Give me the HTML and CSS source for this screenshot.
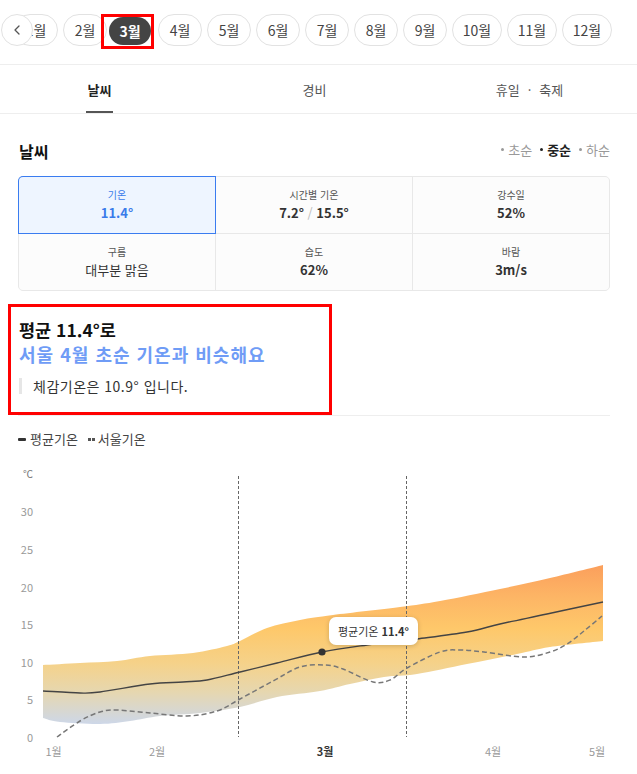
FILE: index.html
```html
<!DOCTYPE html>
<html lang="ko">
<head>
<meta charset="utf-8">
<title>날씨</title>
<link rel="stylesheet" href="styles.css">
</head>
<body>
<div class="months">
  <button class="prev" aria-label="이전"><svg width="30" height="30" viewBox="0 0 30 30"><polyline points="17,11 13,15 17,19" fill="none" stroke="#555" stroke-width="1.3" stroke-linecap="round" stroke-linejoin="round"/></svg></button>
  <span class="pill">1월</span>
  <span class="pill">2월</span>
  <span class="mark"><span class="pill on">3월</span></span>
  <span class="pill">4월</span>
  <span class="pill">5월</span>
  <span class="pill">6월</span>
  <span class="pill">7월</span>
  <span class="pill">8월</span>
  <span class="pill">9월</span>
  <span class="pill wide">10월</span>
  <span class="pill wide">11월</span>
  <span class="pill wide">12월</span>
</div>

<nav class="tabs">
  <div class="tab active"><span>날씨</span></div>
  <div class="tab"><span>경비</span></div>
  <div class="tab"><span>휴일<i class="dot">·</i>축제</span></div>
</nav>

<section class="section">
  <div class="head">
    <h2>날씨</h2>
    <ul class="period">
      <li>초순</li>
      <li class="on">중순</li>
      <li>하순</li>
    </ul>
  </div>

  <div class="stats">
    <div class="cell on"><div class="lbl">기온</div><div class="val">11.4°</div></div>
    <div class="cell"><div class="lbl">시간별 기온</div><div class="val">7.2° <span class="slash">/</span> 15.5°</div></div>
    <div class="cell"><div class="lbl">강수일</div><div class="val">52%</div></div>
    <div class="cell"><div class="lbl">구름</div><div class="val plain">대부분 맑음</div></div>
    <div class="cell"><div class="lbl">습도</div><div class="val">62%</div></div>
    <div class="cell"><div class="lbl">바람</div><div class="val">3m/s</div></div>
  </div>

  <div class="insight">
    <h3>평균 11.4°로<span class="blue">서울 4월 초순 기온과 비슷해요</span></h3>
    <p class="feel">체감기온은 10.9° 입니다.</p>
  </div>
  <div class="rule"></div>

  <div class="legend">
    <span class="lg"><i class="mk solid"></i>평균기온</span>
    <span class="lg"><i class="mk dots"></i>서울기온</span>
  </div>
</section>

<div class="chart">
  <svg width="637" height="319" viewBox="0 455 637 319">
    <defs>
      <linearGradient id="bandFill" gradientUnits="userSpaceOnUse" x1="0" y1="565" x2="0" y2="724">
        <stop offset="0" stop-color="#fb9f5c"/>
        <stop offset="0.2" stop-color="#fdb565"/>
        <stop offset="0.4" stop-color="#fec86a"/>
        <stop offset="0.62" stop-color="#f5d28a"/>
        <stop offset="0.8" stop-color="#e6d7b0"/>
        <stop offset="1" stop-color="#cdd7e8"/>
      </linearGradient>
    </defs>
    <text class="unit" x="33" y="473" text-anchor="end" dominant-baseline="central">℃</text>
    <text class="yl" x="33" y="511" text-anchor="end" dominant-baseline="central">30</text>
    <text class="yl" x="33" y="549" text-anchor="end" dominant-baseline="central">25</text>
    <text class="yl" x="33" y="587" text-anchor="end" dominant-baseline="central">20</text>
    <text class="yl" x="33" y="624" text-anchor="end" dominant-baseline="central">15</text>
    <text class="yl" x="33" y="662" text-anchor="end" dominant-baseline="central">10</text>
    <text class="yl" x="33" y="699" text-anchor="end" dominant-baseline="central">5</text>
    <text class="yl" x="33" y="737" text-anchor="end" dominant-baseline="central">0</text>

    <path id="band" fill="url(#bandFill)" d=""/>
    <line class="vdash" x1="238.5" y1="476" x2="238.5" y2="737"/>
    <line class="vdash" x1="406.5" y1="476" x2="406.5" y2="737"/>
    <path id="seoul" class="seoul" d=""/>
    <path id="avg" class="avg" d=""/>
    <circle cx="322" cy="652" r="3.6" fill="#333"/>

    <text class="xl" x="53.5" y="751" text-anchor="middle" dominant-baseline="central">1월</text>
    <text class="xl" x="157" y="751" text-anchor="middle" dominant-baseline="central">2월</text>
    <text class="xl cur" x="325" y="751" text-anchor="middle" dominant-baseline="central">3월</text>
    <text class="xl" x="493" y="751" text-anchor="middle" dominant-baseline="central">4월</text>
    <text class="xl" x="597" y="751" text-anchor="middle" dominant-baseline="central">5월</text>
  </svg>
  <div class="tip">평균기온 <b>11.4°</b></div>
</div>
<script src="chart.js"></script>
</body>
</html>
```

FILE: styles.css
```css
* { box-sizing: border-box; }
html, body { margin: 0; padding: 0; background: #fff; }
body {
  font-family: "Noto Sans CJK KR", "Noto Sans", sans-serif;
  color: #222;
  width: 637px;
  height: 774px;
  overflow: hidden;
}

/* month selector */
.months {
  position: relative;
  display: flex;
  align-items: flex-start;
  gap: 5px;
  height: 65px;
  padding: 14px 0 0 14px;
  border-bottom: 1px solid #eee;
  overflow: hidden;
}
.pill {
  flex: none;
  width: 44px;
  height: 32px;
  border: 1px solid #e2e2e2;
  border-radius: 16px;
  display: flex;
  align-items: center;
  justify-content: center;
  font-size: 14px;
  color: #444;
  background: #fff;
}
.pill.wide { width: 50px; }
.mark {
  flex: none;
  position: relative;
  width: 53px;
  height: 35px;
  border: 3px solid #f00;
  margin: 0 -1px 0 -11px;
  padding-left: 5px;
}
.pill.on {
  width: 42px;
  height: 28px;
  border: 0;
  border-radius: 14px;
  background: #444;
  color: #fff;
  font-weight: 700;
}
.prev {
  position: absolute;
  z-index: 2;
  left: 1px;
  top: 14px;
  width: 32px;
  height: 32px;
  padding: 0;
  border: 1px solid #e2e2e2;
  border-radius: 50%;
  background: #fff;
}
.prev svg { display: block; }

/* tabs */
.tabs {
  display: grid;
  grid-template-columns: repeat(3, 215px);
  margin-left: -8px;
  height: 49px;
  border-bottom: 1px solid #eee;
}
.tab {
  display: flex;
  justify-content: center;
  font-size: 13px;
  color: #555;
}
.tab span {
  display: flex;
  align-items: center;
  height: 48px;
  padding: 0 2px;
}
.tab.active span {
  font-weight: 700;
  color: #222;
  border-bottom: 2px solid #555;
  padding-top: 2px;
}
.dot { font-style: normal; margin: 0 8px; }

/* section */
.section { padding: 0 27px 0 18px; }
.head {
  display: flex;
  justify-content: space-between;
  align-items: center;
  height: 26px;
  margin-top: 24px;
}
.head h2 {
  margin: 0;
  padding-left: 1px;
  font-size: 16px;
  line-height: 26px;
  font-weight: 700;
  color: #111;
}
.period {
  list-style: none;
  margin: 0 0 3px;
  padding: 0;
  display: flex;
  gap: 8px;
  font-size: 13px;
  line-height: 16px;
  color: #999;
}
.period li { display: flex; align-items: center; }
.period li::before {
  content: "";
  width: 3px;
  height: 3px;
  border-radius: 50%;
  background: currentColor;
  margin-right: 4px;
}
.period li.on { color: #222; font-weight: 700; }

/* stats grid */
.stats {
  display: grid;
  grid-template-columns: repeat(3, 1fr);
  gap: 1px;
  margin-top: 12px;
  background: #e8e8e8;
  border: 1px solid #e8e8e8;
  border-radius: 5px;
}
.cell {
  background: #fcfcfc;
  text-align: center;
  padding: 10px 0;
}
.cell:nth-child(1) { border-top-left-radius: 4px; }
.cell:nth-child(3) { border-top-right-radius: 4px; }
.cell:nth-child(4) { border-bottom-left-radius: 4px; }
.cell:nth-child(6) { border-bottom-right-radius: 4px; }
.cell.on {
  position: relative;
  background: #eef5ff;
  box-shadow: 0 0 0 1px #3a7cf0;
}
.lbl { font-size: 10px; line-height: 16px; color: #555; }
.val { font-size: 13px; line-height: 20px; font-weight: 700; color: #333; }
.val.plain { font-weight: 400; }
.slash { color: #bbb; font-weight: 400; }
.cell.on .lbl, .cell.on .val { color: #3a7bea; }

/* insight */
.insight {
  width: 324px;
  margin: 13px 0 0 -10px;
  border: 3px solid #f00;
  padding: 11px 8px 18px;
}
.insight h3 {
  margin: 0;
  font-size: 17.5px;
  line-height: 24px;
  font-weight: 700;
  color: #111;
}
.insight .blue { display: block; font-size: 18px; color: #6f9cf6; letter-spacing: 1px; }
.feel {
  margin: 12px 0 0;
  border-left: 3px solid #e6e6e6;
  padding-left: 11px;
  font-size: 14px;
  line-height: 16px;
  letter-spacing: 0.5px;
  color: #333;
}
.rule { border-top: 1px solid #eee; }

/* legend */
.legend {
  display: flex;
  gap: 10px;
  height: 18px;
  margin-top: 14px;
  font-size: 13px;
  line-height: 18px;
  color: #444;
}
.lg { display: flex; align-items: center; }
.mk { display: block; width: 8px; height: 3px; margin-right: 4px; }
.mk.solid { background: #333; border-radius: 1px; }
.mk.dots {
  width: 7px;
  margin-right: 3px;
  background: repeating-linear-gradient(90deg, #555 0 3px, transparent 3px 4px);
}

/* chart */
.chart { position: relative; height: 319px; margin-top: 7px; }
.chart svg { display: block; }
.unit { font-size: 10px; fill: #777; }
.yl { font-size: 11px; fill: #999; }
.xl { font-size: 11px; fill: #999; }
.xl.cur { fill: #333; font-weight: 700; }
.vdash { stroke: #666; stroke-width: 1; stroke-dasharray: 3 2; }
.avg { fill: none; stroke: #444; stroke-width: 1.4; }
.seoul { fill: none; stroke: #777; stroke-width: 1.5; stroke-dasharray: 5 3; }
.tip {
  position: absolute;
  left: 329px;
  top: 162px;
  width: 89px;
  height: 28px;
  display: flex;
  align-items: center;
  justify-content: center;
  gap: 3px;
  background: #fff;
  border-radius: 7px;
  box-shadow: 0 1px 5px rgba(0, 0, 0, 0.18);
  font-size: 11px;
  color: #333;
}
.tip b { font-weight: 700; }
```

FILE: chart.js
```js
(function () {
  function seg(pts) {
    var d = '';
    for (var i = 0; i < pts.length - 1; i++) {
      var p0 = pts[i - 1] || pts[i], p1 = pts[i], p2 = pts[i + 1], p3 = pts[i + 2] || p2;
      var c1x = p1[0] + (p2[0] - p0[0]) / 6, c1y = p1[1] + (p2[1] - p0[1]) / 6;
      var c2x = p2[0] - (p3[0] - p1[0]) / 6, c2y = p2[1] - (p3[1] - p1[1]) / 6;
      d += ' C' + c1x.toFixed(1) + ',' + c1y.toFixed(1) + ' ' + c2x.toFixed(1) + ',' + c2y.toFixed(1) + ' ' + p2[0] + ',' + p2[1];
    }
    return d;
  }
  function line(pts) { return 'M' + pts[0][0] + ',' + pts[0][1] + seg(pts); }

  var top = [[43,665],[80,663],[117,661],[150,656],[193,653],[227,646],[240,641],[267,628],[300,620],[333,615],[400,607],[440,601],[500,589],[550,578],[603,565]];
  var bot = [[43,718],[60,722],[100,724],[130,721],[160,716],[200,713],[240,707],[277,697],[320,691],[350,684],[384,677],[417,674],[467,664],[517,654],[550,647],[603,641]];
  var avg = [[43,691],[80,693],[100,692],[150,684],[183,682],[207,680],[240,672],[277,663],[322,652],[367,645],[417,639],[467,632],[500,624],[547,614],[603,602]];
  var seoul = [[57,737],[80,721],[100,712],[117,710],[150,713],[187,716],[217,711],[240,699],[273,681],[300,667],[325,665],[343,669],[373,682],[390,680],[407,668],[440,652],[460,650],[484,652],[524,657],[550,652],[567,644],[584,631],[602,616]];

  var rb = bot.slice().reverse();
  var band = line(top) + ' L' + rb[0][0] + ',' + rb[0][1] + seg(rb) + ' Z';
  document.getElementById('band').setAttribute('d', band);
  document.getElementById('avg').setAttribute('d', line(avg));
  document.getElementById('seoul').setAttribute('d', line(seoul));
})();
```
